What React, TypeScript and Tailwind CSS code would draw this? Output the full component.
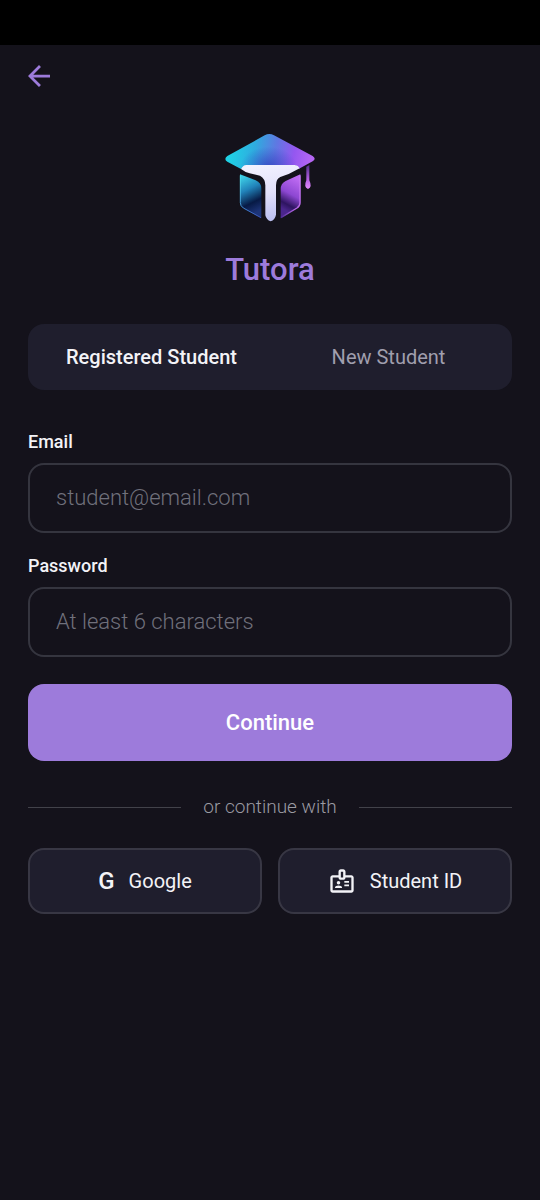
import { useState } from "react";
import { MdOutlineBadge } from "react-icons/md";

function TutoraLogo() {
  return (
    <svg viewBox="44 39 270 267" className="h-[89px] w-[90px]" role="img" aria-label="Tutora logo">
      <defs>
        <linearGradient id="cap" x1="60" y1="90" x2="300" y2="130" gradientUnits="userSpaceOnUse">
          <stop offset="0" stopColor="#1fd2e6" />
          <stop offset="0.3" stopColor="#30aadf" />
          <stop offset="0.55" stopColor="#5f78e2" />
          <stop offset="0.78" stopColor="#9457f0" />
          <stop offset="1" stopColor="#b566f4" />
        </linearGradient>
        <radialGradient id="capShade" cx="0" cy="0" r="1" gradientTransform="translate(175 140) scale(85 60)" gradientUnits="userSpaceOnUse">
          <stop offset="0" stopColor="#2a35b8" stopOpacity="0.65" />
          <stop offset="1" stopColor="#2a35b8" stopOpacity="0" />
        </radialGradient>
        <linearGradient id="letter" x1="150" y1="135" x2="190" y2="304" gradientUnits="userSpaceOnUse">
          <stop offset="0" stopColor="#f2f1ff" />
          <stop offset="0.5" stopColor="#e3e1fa" />
          <stop offset="1" stopColor="#b9bdf0" />
        </linearGradient>
        <linearGradient id="leftFace" x1="92" y1="175" x2="142" y2="275" gradientUnits="userSpaceOnUse">
          <stop offset="0" stopColor="#3ccbe4" />
          <stop offset="0.35" stopColor="#2183ba" />
          <stop offset="0.72" stopColor="#071a45" />
          <stop offset="1" stopColor="#1d3478" />
        </linearGradient>
        <linearGradient id="rightFace" x1="268" y1="180" x2="220" y2="268" gradientUnits="userSpaceOnUse">
          <stop offset="0" stopColor="#bd6af2" />
          <stop offset="0.5" stopColor="#8d47d2" />
          <stop offset="0.82" stopColor="#2e1560" />
          <stop offset="1" stopColor="#4a258c" />
        </linearGradient>
        <linearGradient id="leftRim" x1="88" y1="170" x2="152" y2="294" gradientUnits="userSpaceOnUse">
          <stop offset="0" stopColor="#4fe3ee" />
          <stop offset="1" stopColor="#3b50b8" />
        </linearGradient>
        <linearGradient id="rightRim" x1="270" y1="170" x2="212" y2="294" gradientUnits="userSpaceOnUse">
          <stop offset="0" stopColor="#c77bf5" />
          <stop offset="0.7" stopColor="#b767e6" />
          <stop offset="1" stopColor="#4b2b90" />
        </linearGradient>
        <linearGradient id="tassel" x1="0" y1="138" x2="0" y2="207" gradientUnits="userSpaceOnUse">
          <stop offset="0" stopColor="#57308f" />
          <stop offset="0.6" stopColor="#b862e6" />
          <stop offset="1" stopColor="#e08bfa" />
        </linearGradient>
      </defs>
      <path d="M51 108 L163 46 Q177 38 191 46 L307 108 Q319 117 307 124 L266 146 L255 136 H106 L92 147 L51 125 Q39 117 51 108 Z" fill="url(#cap)" />
      <path d="M51 108 L163 46 Q177 38 191 46 L307 108 Q319 117 307 124 L266 146 L255 136 H106 L92 147 L51 125 Q39 117 51 108 Z" fill="url(#capShade)" />
      <path d="M89 163 L136 181 Q153 188 153 206 V295 L99 265 Q89 259 89 248 Z" fill="url(#leftFace)" />
      <path d="M152 293 L99 264 Q90 258 90 248 V166" fill="none" stroke="url(#leftRim)" strokeWidth="3" />
      <path d="M270 163 V248 Q270 259 260 265 L211 295 V208 Q211 190 226 183 Z" fill="url(#rightFace)" />
      <path d="M269 166 V248 Q269 258 260 264 L212 293" fill="none" stroke="url(#rightRim)" strokeWidth="4" />
      <path d="M107 135 H254 Q264 136 268 145 L235 162 Q222 166 210 171 Q197 177 197 196 V284 Q194 300 181 304 Q168 300 165 286 V196 Q165 176 149 167 L118 160 Q103 156 92 147 Q99 135 107 135 Z" fill="url(#letter)" />
      <path d="M288 140 L297 135 V181 Q307 202 293 207 Q279 202 288 181 Z" fill="url(#tassel)" />
    </svg>
  );
}

type FieldProps = { id: string; label: string; type: string; placeholder: string };

function Field({ id, label, type, placeholder }: FieldProps) {
  return (
    <div className="flex flex-col gap-[9px]">
      <label htmlFor={id} className="text-lg leading-6 font-medium text-[#f3f3f7]">
        {label}
      </label>
      <input
        id={id}
        type={type}
        placeholder={placeholder}
        className="h-[70px] w-full rounded-2xl border-2 border-[#35353f] bg-transparent px-[26px] pb-0.5 text-[22px] font-light text-white outline-none placeholder:text-[#70707b] focus:border-[#9d7bdb]"
      />
    </div>
  );
}

const tabs = ["Registered Student", "New Student"];

export default function App() {
  const [active, setActive] = useState(0);

  return (
    <div className="flex min-h-screen flex-col bg-[#14121b] font-['Roboto',sans-serif] text-[#f3f3f7]">
      <div className="h-[45px] bg-black" />
      <header className="flex px-7 pt-5">
        <button type="button" aria-label="Back" className="text-[#9d7bdb]">
          <svg viewBox="4 4 16 16" className="size-[22px]" fill="currentColor" aria-hidden="true">
            <path d="M20 11H7.83l5.59-5.59L12 4l-8 8 8 8 1.41-1.41L7.83 13H20v-2z" />
          </svg>
        </button>
      </header>

      <main className="flex flex-col px-7 pt-[46px]">
        <div className="flex flex-col items-center gap-7">
          <TutoraLogo />
          <h1 className="text-[31px] leading-10 font-medium text-[#9d7bdb]">Tutora</h1>
        </div>

        <div role="tablist" className="mt-[34px] grid h-[66px] grid-cols-2 rounded-2xl bg-[#1f1e2d] px-[5px]">
          {tabs.map((tab, i) => (
            <button
              key={tab}
              type="button"
              role="tab"
              aria-selected={active === i}
              onClick={() => setActive(i)}
              className={
                active === i
                  ? "text-xl font-medium text-[#f3f3f7]"
                  : "text-xl font-normal text-[#a09fae]"
              }
            >
              {tab}
            </button>
          ))}
        </div>

        <form onSubmit={(e) => e.preventDefault()} className="mt-10 flex flex-col gap-[21px]">
          <Field id="email" label="Email" type="email" placeholder="student@email.com" />
          <Field id="password" label="Password" type="password" placeholder="At least 6 characters" />
          <button type="submit" className="mt-1.5 h-[77px] rounded-2xl bg-[#9d7bdb] text-[22px] font-medium text-white">
            Continue
          </button>
        </form>

        <div className="mt-[34px] flex items-center gap-[22px]">
          <div className="h-px flex-1 bg-[#42424a]" />
          <span className="text-[19px] leading-6 font-light text-[#9b9ba3]">or continue with</span>
          <div className="h-px flex-1 bg-[#42424a]" />
        </div>

        <div className="mt-[29px] grid grid-cols-2 gap-4">
          <button type="button" className="flex h-[66px] items-center justify-center gap-3.5 rounded-2xl border-2 border-[#383744] bg-[#1f1e2d] text-xl">
            <span className="text-2xl font-medium" aria-hidden="true">G</span>
            Google
          </button>
          <button type="button" className="flex h-[66px] items-center justify-center gap-3.5 rounded-2xl border-2 border-[#383744] bg-[#1f1e2d] text-xl">
            <MdOutlineBadge className="size-7" aria-hidden="true" />
            Student ID
          </button>
        </div>
      </main>
    </div>
  );
}
